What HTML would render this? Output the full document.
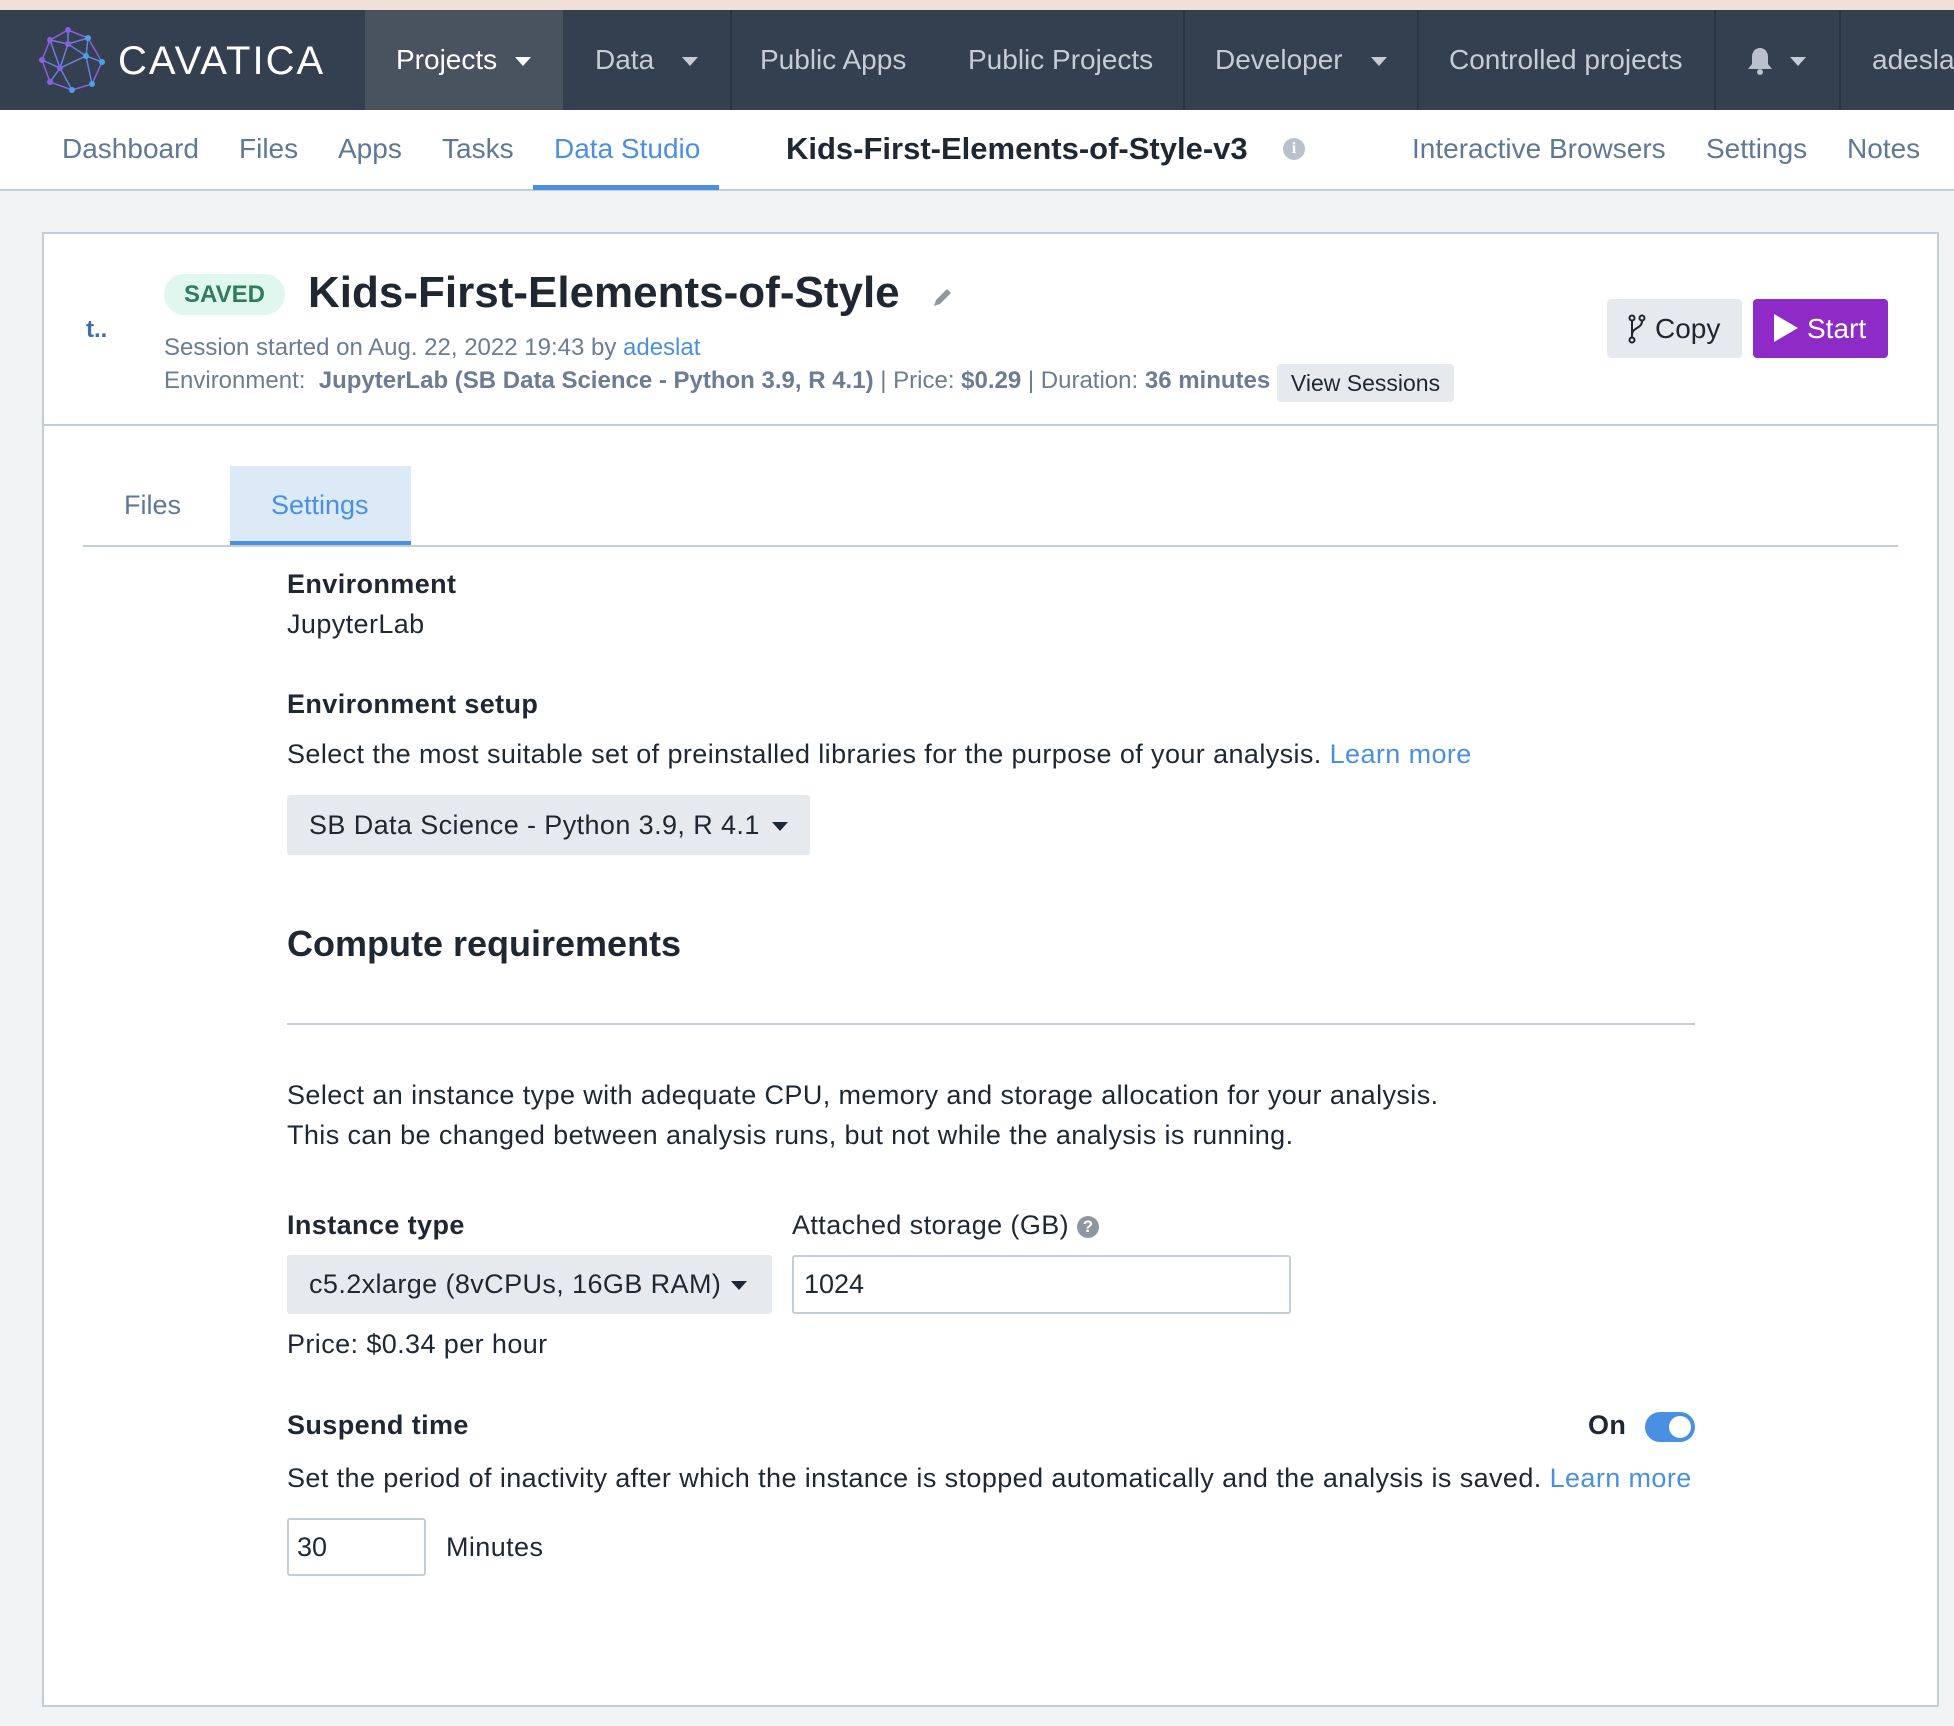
<!DOCTYPE html>
<html><head><meta charset="utf-8"><style>
*{box-sizing:border-box;margin:0;padding:0}
body{width:1954px;height:1726px;position:relative;overflow:hidden;background:#f2f3f5;font-family:"Liberation Sans",Arial,sans-serif;color:#1f2733}
.a{position:absolute;white-space:nowrap;line-height:30px}
.nav{position:absolute;left:0;top:10px;width:1954px;height:100px;background:#343f4f}
.nt{position:absolute;top:45px;font-size:28px;color:#c5ccd6;line-height:30px}
.sub{position:absolute;left:0;top:110px;width:1954px;height:81px;background:#fff;border-bottom:2px solid #c5cdd7}
.st{position:absolute;top:134px;font-size:28px;color:#5f7894;line-height:30px;white-space:nowrap}
.car{display:inline-block;width:0;height:0;border-left:8px solid transparent;border-right:8px solid transparent;border-top:9px solid #c5ccd6;vertical-align:middle;margin-left:18px}
.lbl{font-size:27px;letter-spacing:0.4px;font-weight:bold;color:#1f2733}
.txt{font-size:27px;letter-spacing:0.4px;color:#1f2733}
</style></head><body>
<div style="position:absolute;left:0;top:0;width:1954px;height:10px;background:#f1e0d8"></div>
<div class="nav"></div>
<div style="position:absolute;left:365px;top:10px;width:198px;height:100px;background:#49535f"></div>
<svg style="position:absolute;left:38px;top:26px" width="72" height="68" viewBox="0 0 72 68">
<g stroke-width="1.5" fill="none">
<polygon points="30,4 50,12 64,36 54,58 34,64 12,56 4,34 12,14" stroke="#8a5fe0"/>
<path d="M12,14 L30,18 L50,12 M30,4 L30,18 L48,30 L64,36 M30,18 L22,42 L12,56 M4,34 L22,42 L48,30 L54,58 M22,42 L34,64 M48,30 L50,12 M12,14 L22,42" stroke="#6a7ee0"/>
</g>
<g fill="#8a5fe0"><circle cx="30" cy="4" r="3"/><circle cx="12" cy="14" r="3"/><circle cx="4" cy="34" r="3"/><circle cx="12" cy="56" r="3"/><circle cx="30" cy="18" r="3"/><circle cx="22" cy="42" r="3"/></g>
<g fill="#4aa3e0"><circle cx="50" cy="12" r="3"/><circle cx="64" cy="36" r="3"/><circle cx="54" cy="58" r="3"/><circle cx="34" cy="64" r="3"/><circle cx="48" cy="30" r="3"/></g>
</svg>
<div class="a" style="left:118px;top:39px;font-size:40px;line-height:44px;color:#fff;letter-spacing:2px">CAVATICA</div>
<div class="nt" style="left:396px;color:#fff">Projects<span class="car" style="border-top-color:#fff"></span></div>
<div style="position:absolute;left:730px;top:10px;width:2px;height:100px;background:#2b3441"></div>
<div class="nt" style="left:595px">Data<span class="car" style="margin-left:28px"></span></div>
<div class="nt" style="left:760px">Public Apps</div>
<div class="nt" style="left:968px">Public Projects</div>
<div style="position:absolute;left:1183px;top:10px;width:2px;height:100px;background:#2b3441"></div>
<div class="nt" style="left:1215px">Developer<span class="car" style="margin-left:28px"></span></div>
<div style="position:absolute;left:1417px;top:10px;width:2px;height:100px;background:#2b3441"></div>
<div class="nt" style="left:1449px">Controlled projects</div>
<div style="position:absolute;left:1714px;top:10px;width:2px;height:100px;background:#2b3441"></div>
<svg style="position:absolute;left:1746px;top:46px" width="28" height="30" viewBox="0 0 28 30"><path d="M14 2c-5 0-8 4-8 9v7l-4 5h24l-4-5v-7c0-5-3-9-8-9z" fill="#b8c1cc"/><circle cx="14" cy="26" r="3" fill="#b8c1cc"/></svg>
<div class="nt" style="left:1788px"><span class="car" style="margin-left:2px"></span></div>
<div style="position:absolute;left:1839px;top:10px;width:2px;height:100px;background:#2b3441"></div>
<div class="nt" style="left:1872px">adeslat</div>

<div class="sub"></div>
<div class="st" style="left:62px">Dashboard</div>
<div class="st" style="left:239px">Files</div>
<div class="st" style="left:338px">Apps</div>
<div class="st" style="left:442px">Tasks</div>
<div class="st" style="left:554px;color:#4a90e2">Data Studio</div>
<div style="position:absolute;left:533px;top:185px;width:186px;height:5px;background:#4a90e2"></div>
<div class="st" style="left:786px;color:#1f2733;font-weight:bold;font-size:31px">Kids-First-Elements-of-Style-v3</div>
<div style="position:absolute;left:1283px;top:138px;width:22px;height:22px;border-radius:50%;background:#b8c1cc;color:#fff;font-size:16px;font-weight:bold;text-align:center;line-height:22px;font-family:'Liberation Serif',serif">i</div>
<div class="st" style="left:1412px">Interactive Browsers</div>
<div class="st" style="left:1706px">Settings</div>
<div class="st" style="left:1847px">Notes</div>

<div style="position:absolute;left:42px;top:232px;width:1897px;height:1475px;background:#fff;border:2px solid #c5cdd7"></div>
<div style="position:absolute;left:44px;top:424px;width:1893px;height:2px;background:#c5cdd7"></div>
<div class="a" style="left:86px;top:315px;font-size:24px;font-weight:bold;color:#3b6fb0">t..</div>
<div style="position:absolute;left:164px;top:274px;width:121px;height:41px;border-radius:21px;background:#e0f7ef;color:#2e7d5b;font-size:24px;font-weight:bold;text-align:center;line-height:41px">SAVED</div>
<div class="a" style="left:308px;top:266px;font-size:44px;line-height:54px;font-weight:bold;color:#1f2733">Kids-First-Elements-of-Style</div>
<svg style="position:absolute;left:930px;top:286px" width="24" height="24" viewBox="0 0 24 24"><path d="M4 20l2-6 11-11 4 4-11 11z" fill="#8e96a0"/></svg>
<div class="a" style="left:164px;top:333px;font-size:24px;color:#6b7c93">Session started on Aug. 22, 2022 19:43 by <span style="color:#4a90e2">adeslat</span></div>
<div class="a" style="left:164px;top:366px;font-size:24px;color:#6b7c93">Environment:&nbsp; <b>JupyterLab (SB Data Science - Python 3.9, R 4.1)</b> | Price: <b>$0.29</b> | Duration: <b>36 minutes</b></div>
<div style="position:absolute;left:1277px;top:364px;width:177px;height:38px;background:#e6e9ed;border-radius:4px;font-size:23px;color:#1f2733;text-align:center;line-height:38px">View Sessions</div>
<div style="position:absolute;left:1607px;top:299px;width:135px;height:59px;background:#e6e9ed;border-radius:4px;font-size:28px;color:#1f2733;line-height:59px;padding-left:48px">Copy</div>
<svg style="position:absolute;left:1627px;top:314px" width="20" height="30" viewBox="0 0 20 30"><g stroke="#1f2733" stroke-width="2" fill="none"><circle cx="5" cy="4" r="2.5"/><circle cx="15" cy="4" r="2.5"/><circle cx="5" cy="26" r="2.5"/><path d="M5 7v16M15 7c0 8-10 6-10 14"/></g></svg>
<div style="position:absolute;left:1753px;top:299px;width:135px;height:59px;background:#8e2ac6;border-radius:4px;font-size:28px;color:#fff;line-height:59px;padding-left:54px">Start</div>
<svg style="position:absolute;left:1774px;top:314px" width="24" height="28"><polygon points="0,0 24,14 0,28" fill="#fff"/></svg>

<div style="position:absolute;left:83px;top:545px;width:1815px;height:2px;background:#c5cdd7"></div>
<div style="position:absolute;left:230px;top:466px;width:181px;height:79px;background:#dce9f7;border-bottom:4px solid #4a90e2"></div>
<div class="a" style="left:124px;top:490px;font-size:27px;color:#5f7894">Files</div>
<div class="a" style="left:271px;top:490px;font-size:27px;color:#4a90e2">Settings</div>

<div class="a lbl" style="left:287px;top:569px">Environment</div>
<div class="a txt" style="left:287px;top:609px">JupyterLab</div>
<div class="a lbl" style="left:287px;top:689px">Environment setup</div>
<div class="a txt" style="left:287px;top:739px">Select the most suitable set of preinstalled libraries for the purpose of your analysis. <span style="color:#4a90e2">Learn more</span></div>
<div style="position:absolute;left:287px;top:795px;width:523px;height:60px;background:#e6e9ed;border-radius:3px;font-size:27px;letter-spacing:0.4px;line-height:60px;padding-left:22px;white-space:nowrap">SB Data Science - Python 3.9, R 4.1<span style="display:inline-block;border-left:8px solid transparent;border-right:8px solid transparent;border-top:9px solid #1f2733;margin-left:12px;vertical-align:middle"></span></div>
<div class="a" style="left:287px;top:924px;font-size:36px;line-height:40px;font-weight:bold">Compute requirements</div>
<div style="position:absolute;left:287px;top:1023px;width:1408px;height:2px;background:#c5cdd7"></div>
<div class="a txt" style="left:287px;top:1080px">Select an instance type with adequate CPU, memory and storage allocation for your analysis.</div>
<div class="a txt" style="left:287px;top:1120px">This can be changed between analysis runs, but not while the analysis is running.</div>
<div class="a lbl" style="left:287px;top:1210px">Instance type</div>
<div class="a txt" style="left:792px;top:1210px">Attached storage (GB) <span style="display:inline-block;width:22px;height:22px;border-radius:50%;background:#8e96a0;color:#fff;font-size:17px;font-weight:bold;text-align:center;line-height:22px;vertical-align:2px;letter-spacing:0">?</span></div>
<div style="position:absolute;left:287px;top:1255px;width:485px;height:59px;background:#e6e9ed;border-radius:3px;font-size:27px;letter-spacing:0.4px;line-height:59px;padding-left:22px;white-space:nowrap">c5.2xlarge (8vCPUs, 16GB RAM)<span style="display:inline-block;border-left:8px solid transparent;border-right:8px solid transparent;border-top:9px solid #1f2733;margin-left:10px;vertical-align:middle"></span></div>
<div style="position:absolute;left:792px;top:1255px;width:499px;height:59px;border:2px solid #c5cdd7;border-radius:3px;font-size:27px;line-height:55px;padding-left:10px">1024</div>
<div class="a txt" style="left:287px;top:1329px">Price: $0.34 per hour</div>
<div class="a lbl" style="left:287px;top:1410px">Suspend time</div>
<div class="a lbl" style="left:1588px;top:1410px">On</div>
<div style="position:absolute;left:1645px;top:1412px;width:50px;height:30px;border-radius:15px;background:#4a90e2"><div style="position:absolute;right:4px;top:4px;width:22px;height:22px;border-radius:50%;background:#fff"></div></div>
<div class="a txt" style="left:287px;top:1463px">Set the period of inactivity after which the instance is stopped automatically and the analysis is saved. <span style="color:#4a90e2">Learn more</span></div>
<div style="position:absolute;left:287px;top:1518px;width:139px;height:58px;border:2px solid #c5cdd7;border-radius:3px;font-size:27px;line-height:54px;padding-left:8px">30</div>
<div class="a txt" style="left:446px;top:1532px">Minutes</div>
</body></html>
